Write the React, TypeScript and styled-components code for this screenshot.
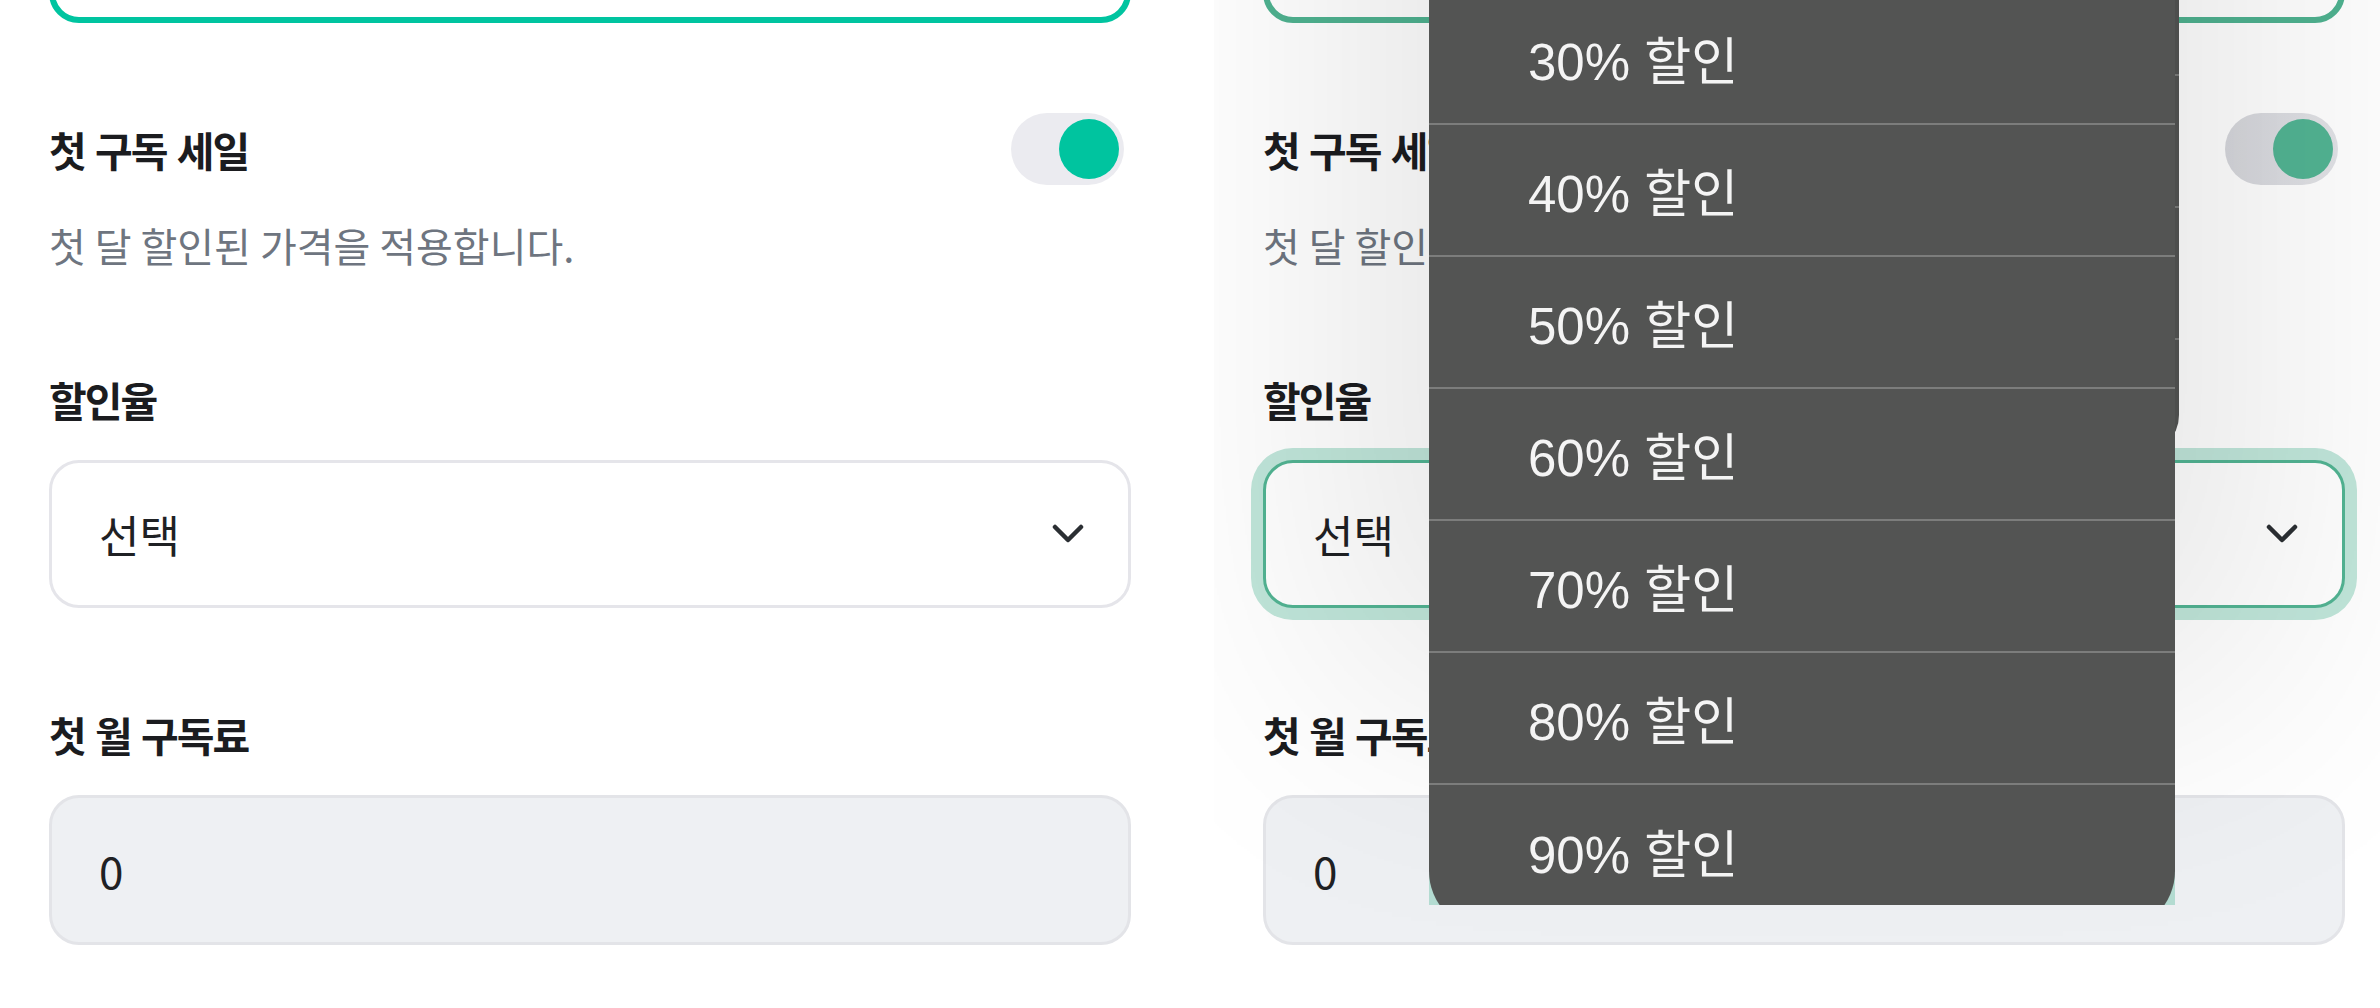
import React from "react";
import styled, { createGlobalStyle } from "styled-components";

const Global = createGlobalStyle`
  html, body { margin: 0; padding: 0; background: #ffffff; overflow: hidden; }
  body { font-family: "Noto Sans CJK KR", "Noto Sans", sans-serif; }
  #root { width: 2380px; height: 1008px; }
`;

type Tone = "live" | "dimmed";

const Page = styled.div`
  display: flex;
  gap: 34px;
  width: 2380px;
  height: 1008px;
  overflow: hidden;
  background: #ffffff;
`;

const Screen = styled.section`
  position: relative;
  flex: 0 0 1180px;
  height: 1008px;
  box-sizing: border-box;
  padding: 0 49px;
  overflow: hidden;
  background: #ffffff;
`;

const Form = styled.div`
  display: flex;
  flex-direction: column;
`;

const TopField = styled.div<{ $tone: Tone }>`
  height: 150px;
  margin-top: -127px;
  box-sizing: border-box;
  border: 6px solid ${(p) => (p.$tone === "live" ? "#00c4a0" : "#4fb290")};
  border-radius: 30px;
`;

const ToggleRow = styled.div`
  display: flex;
  align-items: center;
  justify-content: space-between;
  height: 72px;
  margin-top: 90px;
`;

const Label = styled.div`
  font-size: 41px;
  font-weight: 700;
  line-height: 56px;
  letter-spacing: -2px;
  word-spacing: 3px;
  color: #1b1c1f;
`;

const Switch = styled.div<{ $tone: Tone }>`
  display: flex;
  align-items: center;
  justify-content: flex-end;
  box-sizing: border-box;
  width: 113px;
  height: 72px;
  padding: 0 5px;
  margin-right: 7px;
  border-radius: 36px;
  background: ${(p) =>
    p.$tone === "live" ? "#ebebf0" : "linear-gradient(90deg, #d6d7dc, #e2e3e7)"};
`;

const Knob = styled.span<{ $tone: Tone }>`
  width: 60px;
  height: 60px;
  border-radius: 50%;
  background: ${(p) => (p.$tone === "live" ? "#00c49f" : "#52b493")};
`;

const Description = styled.p`
  margin: 32px 0 0;
  font-size: 40px;
  line-height: 56px;
  color: #6e7580;
`;

const Field = styled.div`
  display: flex;
  flex-direction: column;
  gap: 33px;
  margin-top: 98px;
`;

const SelectBox = styled.div<{ $tone: Tone }>`
  display: flex;
  align-items: center;
  justify-content: space-between;
  height: 148px;
  box-sizing: border-box;
  padding: 0 44px 0 47px;
  border: 3px solid ${(p) => (p.$tone === "live" ? "#e5e5ea" : "#52b493")};
  border-radius: 30px;
  box-shadow: ${(p) => (p.$tone === "live" ? "none" : "0 0 0 12px #c0e6da")};
  background: #ffffff;
`;

const Value = styled.span`
  font-size: 44px;
  line-height: 56px;
  color: #1f2124;
`;

const NumberInput = styled.div`
  display: flex;
  align-items: center;
  height: 150px;
  box-sizing: border-box;
  padding: 0 47px;
  border: 3px solid #e3e4e8;
  border-radius: 30px;
  background: #eef0f3;
`;

const Picker = styled.div`
  position: absolute;
  left: 215px;
  top: 0;
  width: 750px;
  height: 905px;
`;

const BackSheet = styled.div`
  position: absolute;
  left: 0;
  top: 0;
  width: 750px;
  height: 455px;
  overflow: hidden;
  border-bottom-right-radius: 40px;
  background: #535453;
`;

const BackList = styled.div`
  margin-top: -56px;
`;

const BackRow = styled.div`
  height: 130px;
  border-bottom: 2px solid #7c7d7c;
`;

const FrontClip = styled.div`
  position: absolute;
  left: 0;
  top: 0;
  width: 746px;
  height: 905px;
  overflow: hidden;
  background: #b3dbd1;
  box-shadow: 0 -300px 300px 100px rgba(0, 0, 0, 0.095);
`;

const OptionList = styled.ul`
  list-style: none;
  margin: -7px 0 0;
  padding: 0 0 14px;
  background: #535453;
  border-radius: 0 0 60px 60px;
`;

const Option = styled.li`
  display: flex;
  align-items: center;
  height: 130px;
  padding-left: 99px;
  border-bottom: 2px solid #7c7d7c;
  font-family: "Liberation Sans", "Noto Sans CJK KR", sans-serif;
  font-size: 51px;
  color: #f4f4f4;
  &:last-child {
    border-bottom: none;
    height: 132px;
  }
`;

const Chevron = () => (
  <svg width="32" height="20" viewBox="0 0 32 20" fill="none">
    <path d="M3 3 L16 16 L29 3" stroke="#2b2f33" strokeWidth="4.5" strokeLinecap="round" strokeLinejoin="round" />
  </svg>
);

const options = ["30% 할인", "40% 할인", "50% 할인", "60% 할인", "70% 할인", "80% 할인", "90% 할인"];

const SubscriptionForm = ({ tone }: { tone: Tone }) => (
  <Form>
    <TopField $tone={tone} />
    <ToggleRow>
      <Label>첫 구독 세일</Label>
      <Switch $tone={tone}>
        <Knob $tone={tone} />
      </Switch>
    </ToggleRow>
    <Description>첫 달 할인된 가격을 적용합니다.</Description>
    <Field>
      <Label>할인율</Label>
      <SelectBox $tone={tone}>
        <Value>선택</Value>
        <Chevron />
      </SelectBox>
    </Field>
    <Field>
      <Label>첫 월 구독료</Label>
      <NumberInput>
        <Value>0</Value>
      </NumberInput>
    </Field>
  </Form>
);

export default function App() {
  return (
    <>
      <Global />
      <Page>
        <Screen>
          <SubscriptionForm tone="live" />
        </Screen>
        <Screen>
          <SubscriptionForm tone="dimmed" />
          <Picker>
            <BackSheet>
              <BackList>
                {[0, 1, 2, 3].map((i) => (
                  <BackRow key={i} />
                ))}
              </BackList>
            </BackSheet>
            <FrontClip>
              <OptionList>
                {options.map((o) => (
                  <Option key={o}>{o}</Option>
                ))}
              </OptionList>
            </FrontClip>
          </Picker>
        </Screen>
      </Page>
    </>
  );
}
